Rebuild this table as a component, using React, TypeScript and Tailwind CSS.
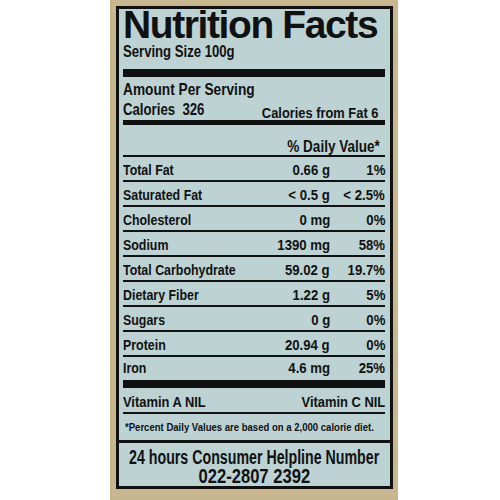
const rows = [
  ["Total Fat", "0.66 g", "1%"],
  ["Saturated Fat", "< 0.5 g", "< 2.5%"],
  ["Cholesterol", "0 mg", "0%"],
  ["Sodium", "1390 mg", "58%"],
  ["Total Carbohydrate", "59.02 g", "19.7%"],
  ["Dietary Fiber", "1.22 g", "5%"],
  ["Sugars", "0 g", "0%"],
  ["Protein", "20.94 g", "0%"],
];

// the label is set in a condensed face; squeeze Liberation Sans to match
function Sq({ className, children }: { className: string; children: React.ReactNode }) {
  return <span className={`inline-block whitespace-nowrap ${className}`}>{children}</span>;
}

function Row({ name, amount, pct, last }: { name: string; amount: string; pct: string; last?: boolean }) {
  return (
    <div
      className={`grid grid-cols-[1fr_auto_55px] items-end text-[15.5px] leading-[18px] font-bold ${
        last ? "h-[23px] pb-[3px]" : "h-[25px] pb-[1px] border-b-2 border-[#111]"
      }`}
    >
      <Sq className="scale-x-[0.8] origin-left">{name}</Sq>
      <div className="text-right">
        <Sq className="scale-x-[0.85] origin-right">{amount}</Sq>
      </div>
      <div className="text-right">
        <Sq className="scale-x-[0.85] origin-right">{pct}</Sq>
      </div>
    </div>
  );
}

export default function App() {
  return (
    <div className="w-[500px] h-[500px] bg-white pl-[110px]">
      <div className="w-[288px] h-[500px] bg-[#c8b68f] pl-[6px] pt-[6px]">
        <div className="w-[277px] h-[483px] bg-[#bcd2d3] border-[3px] border-[#111] text-[#111] flex flex-col font-['Liberation_Sans',Arial,sans-serif]">
          <div className="pl-[4px] pr-[5px] flex flex-col">
            <div className="h-[32px] text-[39px] leading-[32px] font-bold tracking-[-1.4px] whitespace-nowrap">
              Nutrition Facts
            </div>
            <div className="mt-[3px] h-[16px] text-[16px] leading-[16px] font-bold">
              <Sq className="scale-x-[0.82] origin-left">Serving Size 100g</Sq>
            </div>
            <div className="mt-[9px] h-[8px] bg-[#111]" />
            <div className="mt-[4px] h-[16px] text-[16.5px] leading-[16px] font-bold">
              <Sq className="scale-x-[0.83] origin-left">Amount Per Serving</Sq>
            </div>
            <div className="mt-[5px] h-[17px] flex justify-between items-end leading-[16px] font-bold pr-[7px]">
              <Sq className="mb-[2px] text-[16.5px] scale-x-[0.8] origin-left">Calories&nbsp; 326</Sq>
              <Sq className="mb-[-2px] text-[15.5px] scale-x-[0.83] origin-right">Calories from Fat 6</Sq>
            </div>
            <div className="mt-[1px] h-[5px] bg-[#111]" />
            <div className="h-[32px] flex items-end justify-end border-b-2 border-[#111] text-[16.5px] leading-[18px] font-bold pr-[5px]">
              <Sq className="scale-x-[0.82] origin-right">% Daily Value*</Sq>
            </div>
            {rows.map((r) => (
              <Row key={r[0]} name={r[0]} amount={r[1]} pct={r[2]} />
            ))}
            <Row name="Iron" amount="4.6 mg" pct="25%" last />
            <div className="h-[8px] bg-[#111]" />
            <div className="h-[26px] flex justify-between items-end pb-[1px] border-b-2 border-[#111] text-[15px] leading-[18px] font-bold">
              <Sq className="scale-x-[0.86] origin-left">Vitamin A NIL</Sq>
              <Sq className="scale-x-[0.86] origin-right">Vitamin C NIL</Sq>
            </div>
            <div className="h-[26px] flex items-center text-[11.5px] leading-[14px] font-bold pl-[2px]">
              <Sq className="scale-x-[0.83] origin-left">*Percent Daily Values are based on a 2,000 calorie diet.</Sq>
            </div>
          </div>
          <div className="flex-1 border-t-[3px] border-[#111] flex flex-col items-center pt-[4px] font-bold">
            <Sq className="text-[20px] leading-[20px] scale-x-[0.71] origin-center">24 hours Consumer Helpline Number</Sq>
            <Sq className="text-[20px] leading-[19px] scale-x-[0.83] origin-center">022-2807 2392</Sq>
          </div>
        </div>
      </div>
    </div>
  );
}
